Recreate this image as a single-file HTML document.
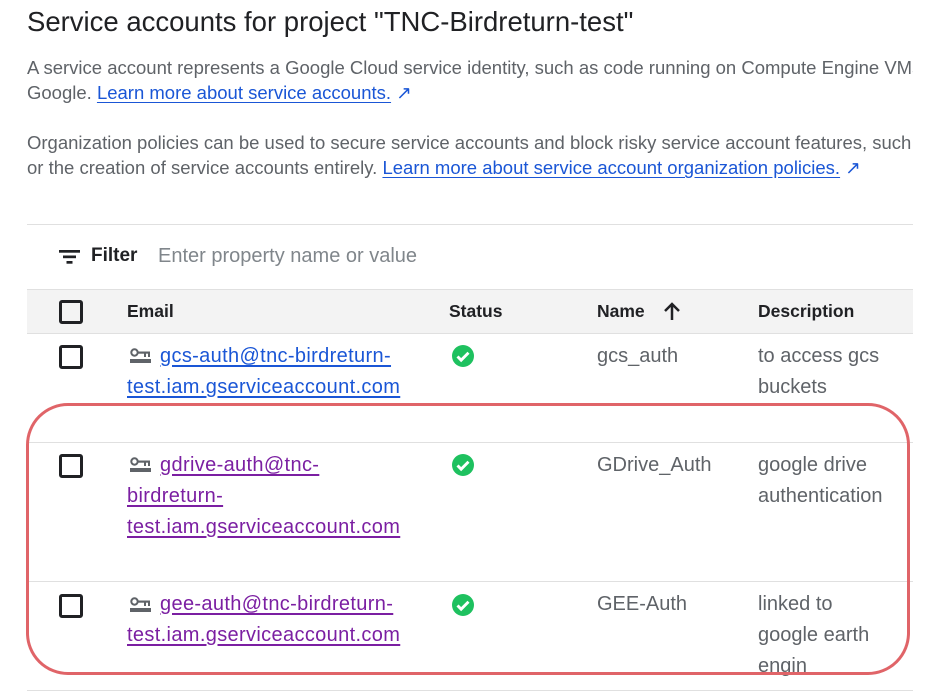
<!DOCTYPE html>
<html><head><meta charset="utf-8"><style>
body{margin:0;width:932px;height:699px;background:#fff;overflow:hidden;position:relative;font-family:"Liberation Sans",Arial,sans-serif;}
.a{position:absolute;white-space:nowrap;}
.t{font-size:18.5px;color:#5f6368;}
.r{font-size:20px;color:#5f6368;}
.lk{color:#1a56d6;text-decoration:underline;text-underline-offset:3px;}
.pl{color:#7b1fa2;text-decoration:underline;text-underline-offset:3px;}
.em{letter-spacing:0.35px;}
.cb{position:absolute;width:24px;height:24px;border:3px solid #202124;border-radius:3px;box-sizing:border-box;}
.line{position:absolute;left:27px;width:886px;height:1px;background:#e0e0e0;}
.hd{font-size:17.5px;color:#202124;font-weight:bold;}
.ck{position:absolute;width:22px;height:22px;}
</style></head><body>
<div class="a" style="left:27px;top:6px;font-size:27.5px;color:#202124;">Service accounts for project "TNC-Birdreturn-test"</div>
<div style="position:absolute;left:0;top:0;width:913px;height:699px;overflow:hidden;">
<div class="a t" style="left:27px;top:57px;">A service account represents a Google Cloud service identity, such as code running on Compute Engine VMs</div>
<div class="a t" style="left:27px;top:82px;">Google. <span class="lk">Learn more about service accounts.</span> <span style="color:#1a56d6">↗</span></div>
<div class="a t" style="left:27px;top:132px;">Organization policies can be used to secure service accounts and block risky service account features, such</div>
<div class="a t" style="left:27px;top:157px;">or the creation of service accounts entirely. <span class="lk">Learn more about service account organization policies.</span> <span style="color:#1a56d6">↗</span></div>
</div>
<div class="line" style="top:224px;"></div>
<svg class="a" style="left:59px;top:249px" width="21" height="16"><rect x="0" y="1" width="21" height="2.7" fill="#202124"/><rect x="4" y="6.5" width="13" height="2.7" fill="#202124"/><rect x="7.5" y="12" width="6" height="2.7" fill="#202124"/></svg>
<div class="a" style="left:91px;top:245px;font-size:19px;font-weight:bold;color:#202124;">Filter</div>
<div class="a" style="left:158px;top:245px;font-size:20px;color:#80868b;">Enter property name or value</div>
<div style="position:absolute;left:27px;top:289px;width:886px;height:44px;background:#f3f3f3;border-top:1px solid #e0e0e0;"></div>
<div class="line" style="top:333px;"></div>
<div class="cb" style="left:59px;top:300px;"></div>
<div class="a hd" style="left:127px;top:301px;">Email</div>
<div class="a hd" style="left:449px;top:301px;">Status</div>
<div class="a hd" style="left:597px;top:301px;">Name</div>
<svg class="a" style="left:662px;top:301px" width="20" height="20"><path d="M10 19V3M3 10l7-7 7 7" stroke="#202124" stroke-width="2.5" fill="none"/></svg>
<div class="a hd" style="left:758px;top:301px;">Description</div>

<!-- row1 -->
<div class="cb" style="left:59px;top:345px;"></div>
<svg class="a" style="left:130px;top:348px" width="22" height="18"><circle cx="4.5" cy="4.5" r="3.2" stroke="#5f6368" stroke-width="2" fill="none"/><rect x="7" y="3.5" width="13" height="2.2" fill="#5f6368"/><rect x="14" y="5" width="2" height="4" fill="#5f6368"/><rect x="18" y="5" width="2" height="4" fill="#5f6368"/><rect x="0" y="11" width="21" height="4" fill="#5f6368"/></svg>
<div class="a r em" style="left:160px;top:345px;"><span class="lk">gcs-auth@tnc-birdreturn-</span></div>
<div class="a r em" style="left:127px;top:376px;"><span class="lk">test.iam.gserviceaccount.com</span></div>
<svg class="ck" style="left:452px;top:345px" viewBox="0 0 20 20"><circle cx="10" cy="10" r="10" fill="#1ec15f"/><path d="M5 10.5l3.3 3.3L15 7" stroke="#fff" stroke-width="2.6" fill="none"/></svg>
<div class="a r" style="left:597px;top:345px;">gcs_auth</div>
<div class="a r" style="left:758px;top:345px;">to access gcs</div>
<div class="a r" style="left:758px;top:376px;">buckets</div>
<div class="line" style="top:442px;"></div>

<!-- row2 -->
<div class="cb" style="left:59px;top:454px;"></div>
<svg class="a" style="left:130px;top:457px" width="22" height="18"><circle cx="4.5" cy="4.5" r="3.2" stroke="#5f6368" stroke-width="2" fill="none"/><rect x="7" y="3.5" width="13" height="2.2" fill="#5f6368"/><rect x="14" y="5" width="2" height="4" fill="#5f6368"/><rect x="18" y="5" width="2" height="4" fill="#5f6368"/><rect x="0" y="11" width="21" height="4" fill="#5f6368"/></svg>
<div class="a r em" style="left:160px;top:454px;"><span class="pl">gdrive-auth@tnc-</span></div>
<div class="a r em" style="left:127px;top:485px;"><span class="pl">birdreturn-</span></div>
<div class="a r em" style="left:127px;top:516px;"><span class="pl">test.iam.gserviceaccount.com</span></div>
<svg class="ck" style="left:452px;top:454px" viewBox="0 0 20 20"><circle cx="10" cy="10" r="10" fill="#1ec15f"/><path d="M5 10.5l3.3 3.3L15 7" stroke="#fff" stroke-width="2.6" fill="none"/></svg>
<div class="a r" style="left:597px;top:454px;">GDrive_Auth</div>
<div class="a r" style="left:758px;top:454px;">google drive</div>
<div class="a r" style="left:758px;top:485px;">authentication</div>
<div class="line" style="top:581px;"></div>

<!-- row3 -->
<div class="cb" style="left:59px;top:594px;"></div>
<svg class="a" style="left:130px;top:597px" width="22" height="18"><circle cx="4.5" cy="4.5" r="3.2" stroke="#5f6368" stroke-width="2" fill="none"/><rect x="7" y="3.5" width="13" height="2.2" fill="#5f6368"/><rect x="14" y="5" width="2" height="4" fill="#5f6368"/><rect x="18" y="5" width="2" height="4" fill="#5f6368"/><rect x="0" y="11" width="21" height="4" fill="#5f6368"/></svg>
<div class="a r em" style="left:160px;top:593px;"><span class="pl">gee-auth@tnc-birdreturn-</span></div>
<div class="a r em" style="left:127px;top:624px;"><span class="pl">test.iam.gserviceaccount.com</span></div>
<svg class="ck" style="left:452px;top:594px" viewBox="0 0 20 20"><circle cx="10" cy="10" r="10" fill="#1ec15f"/><path d="M5 10.5l3.3 3.3L15 7" stroke="#fff" stroke-width="2.6" fill="none"/></svg>
<div class="a r" style="left:597px;top:593px;">GEE-Auth</div>
<div class="a r" style="left:758px;top:593px;">linked to</div>
<div class="a r" style="left:758px;top:624px;">google earth</div>
<div class="a r" style="left:758px;top:655px;">engin</div>
<div class="line" style="top:690px;"></div>

<div style="position:absolute;left:26px;top:403px;width:878px;height:266px;border:3px solid #e06468;border-radius:42px;"></div>
</body></html>
